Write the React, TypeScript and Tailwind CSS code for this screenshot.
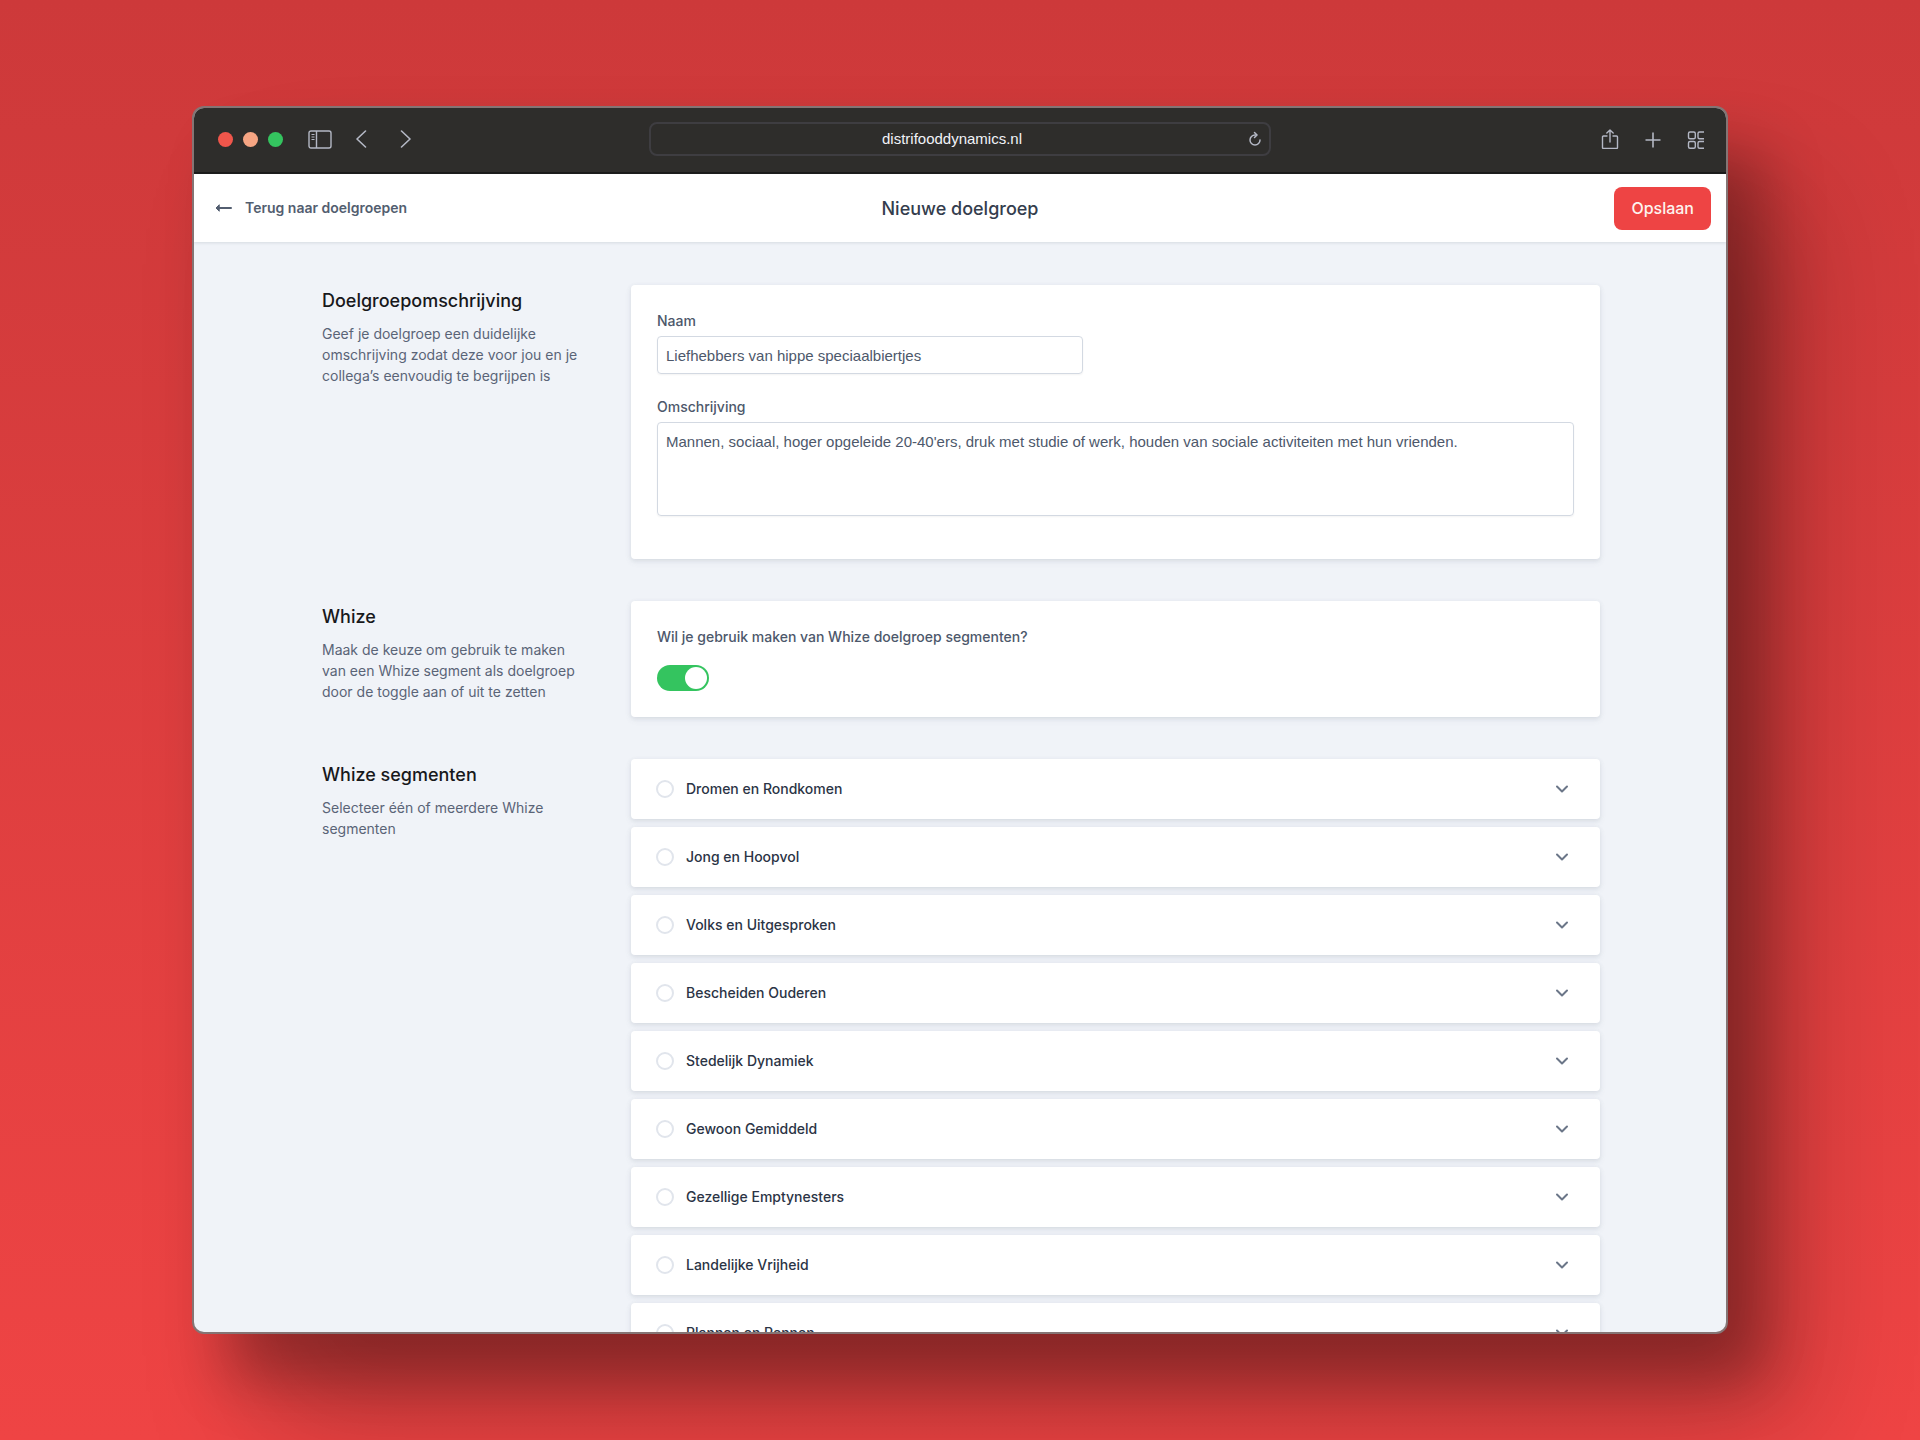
import { FC, ReactElement, ReactNode, useState } from "react";

const segments = [
  "Dromen en Rondkomen",
  "Jong en Hoopvol",
  "Volks en Uitgesproken",
  "Bescheiden Ouderen",
  "Stedelijk Dynamiek",
  "Gewoon Gemiddeld",
  "Gezellige Emptynesters",
  "Landelijke Vrijheid",
  "Plannen en Rennen",
];

const cardShadow = "shadow-[0_1px_4px_rgba(110,120,135,0.12),0_3px_6px_rgba(110,120,135,0.10)]";

const BrowserBar: FC = (): ReactElement => (
  <div className="grid h-[66px] shrink-0 grid-cols-[1fr_622px_1fr] items-center border-b-2 border-[#1a1a1a] bg-[#2e2d2b] pb-0.5 text-[#b4b8c5]">
    <div className="flex items-center pl-6">
      <div className="flex gap-[10px]">
        <span className="size-[15px] rounded-full bg-[#f0564b]" />
        <span className="size-[15px] rounded-full bg-[#f6a583]" />
        <span className="size-[15px] rounded-full bg-[#34c45f]" />
      </div>
      <button type="button" aria-label="Zijbalk" className="ml-[25px]">
        <svg className="h-[19px] w-6" viewBox="0 0 24 19" fill="none" stroke="currentColor">
          <rect x="1" y="1" width="22" height="17" rx="2" strokeWidth="1.4" />
          <path d="M8.5 1v17" strokeWidth="1.4" />
          <path d="M3.5 4.5h3M3.5 7h3M3.5 9.5h3" />
        </svg>
      </button>
      <button type="button" aria-label="Vorige" className="ml-[23px]">
        <svg className="h-[19px] w-3" viewBox="0 0 12 19" fill="none" stroke="currentColor" strokeWidth="1.6" strokeLinecap="round" strokeLinejoin="round">
          <path d="M10.5 1 2 9l8.500 8" />
        </svg>
      </button>
      <button type="button" aria-label="Volgende" className="ml-8">
        <svg className="h-[19px] w-3" viewBox="0 0 12 19" fill="none" stroke="currentColor" strokeWidth="1.6" strokeLinecap="round" strokeLinejoin="round">
          <path d="m2.500 1 8.500 8-8.500 8" />
        </svg>
      </button>
    </div>

    <div className="flex h-[34px] items-center rounded-lg border-2 border-[#3e3d41] px-1.5">
      <span className="flex-1 text-center font-['Liberation_Sans',Arial,sans-serif] text-[15px] text-[#f1f3f8]">
        distrifooddynamics.nl
      </span>
      <button type="button" aria-label="Vernieuwen">
        <svg className="size-4" viewBox="0 0 16 16" fill="none" stroke="currentColor" strokeWidth="1.5" strokeLinecap="round" strokeLinejoin="round">
          <path d="M13 9a5 5 0 1 1-5-5h1.500" />
          <path d="M7.500 1.500l2.500 2.500-2.500 2.500" />
        </svg>
      </button>
    </div>

    <div className="flex items-center justify-end gap-[23px] pr-5">
      <button type="button" aria-label="Delen">
        <svg className="size-5" viewBox="0 0 20 20" fill="none" stroke="currentColor" strokeWidth="1.4" strokeLinecap="round" strokeLinejoin="round">
          <path d="M7 7H3.500q-1 0-1 1v10.500q0 1 1 1h13q1 0 1-1V8q0-1-1-1H13" />
          <path d="M10 13V1M6.800 4 10 1l3.200 3" />
        </svg>
      </button>
      <button type="button" aria-label="Nieuw tabblad">
        <svg className="size-5" viewBox="0 0 20 20" fill="none" stroke="currentColor" strokeWidth="1.6">
          <path d="M10 3.500v15M2.500 11h15" />
        </svg>
      </button>
      <button type="button" aria-label="Tabbladoverzicht">
        <svg className="size-5" viewBox="0 0 20 20" fill="none" stroke="currentColor" strokeWidth="1.4">
          <rect x="2.500" y="3" width="6.800" height="6.800" rx="1.500" />
          <rect x="2.500" y="12.500" width="6.800" height="6.800" rx="1.500" />
          <path d="M18 3h-4.500q-1.500 0-1.500 1.500v3.800q0 1.500 1.500 1.500H18" />
          <path d="M18 12.500h-4.500q-1.500 0-1.500 1.500v3.800q0 1.500 1.500 1.500H18" />
        </svg>
      </button>
    </div>
  </div>
);

const Section: FC<{ title: string; text: string; children: ReactNode }> = ({ title, text, children }): ReactElement => (
  <section className="grid grid-cols-[267px_1fr] gap-[42px]">
    <div>
      <h2 className="text-lg font-medium leading-8 text-[#18181b]">{title}</h2>
      <p className="mt-1.5 text-sm leading-[21px] text-[#5a6477]">{text}</p>
    </div>
    {children}
  </section>
);

const SegmentRow: FC<{ name: string }> = ({ name }): ReactElement => (
  <li className={`flex h-[60px] items-center rounded bg-white pl-[25px] pr-7 ${cardShadow}`}>
    <label className="flex items-center gap-3 text-sm font-medium text-[#2b3445]">
      <input
        type="checkbox"
        className="size-[18px] appearance-none rounded-full border-2 border-[#e1e5ec] bg-white checked:bg-[#34c45f]"
      />
      {name}
    </label>
    <button type="button" aria-label={`${name} uitklappen`} className="ml-auto text-[#6b7688]">
      <svg className="size-5" viewBox="0 0 20 20" fill="none" stroke="currentColor" strokeWidth="2" strokeLinecap="round" strokeLinejoin="round">
        <path d="m5 7.500 5 5 5-5" />
      </svg>
    </button>
  </li>
);

const App: FC = (): ReactElement => {
  const [name, setName] = useState("Liefhebbers van hippe speciaalbiertjes");
  const [description, setDescription] = useState(
    "Mannen, sociaal, hoger opgeleide 20-40'ers, druk met studie of werk, houden van sociale activiteiten met hun vrienden.",
  );
  const [useWhize, setUseWhize] = useState(true);

  return (
    <div className="h-screen overflow-hidden bg-linear-to-b from-[#cd393a] to-[#ef4444] px-48 py-[106px] font-[Inter,'Liberation_Sans',sans-serif]">
      <div className="flex h-full flex-col overflow-hidden rounded-xl border-2 border-[#857474] bg-[#f0f3f8] shadow-[36px_46px_60px_rgba(0,0,0,0.28),70px_90px_120px_rgba(0,0,0,0.22)]">
        <BrowserBar />

        <header className="z-10 grid h-[68px] shrink-0 grid-cols-[1fr_auto_1fr] items-center bg-white px-[15px] shadow-[0_1px_3px_rgba(110,120,135,0.2)]">
          <a href="#doelgroepen" className="flex items-center gap-3 pl-[5px] text-sm font-semibold text-[#535e70]">
            <svg className="h-4 w-[19px]" viewBox="0 0 19 16" fill="none" stroke="currentColor" strokeWidth="2" strokeLinecap="round" strokeLinejoin="round">
              <path d="M17 8H3" />
              <path d="M5 5 2 8l3 3Z" fill="currentColor" strokeWidth="1" />
            </svg>
            Terug naar doelgroepen
          </a>
          <h1 className="pt-0.5 text-lg font-medium text-[#343d4d]">Nieuwe doelgroep</h1>
          <button type="submit" form="doelgroep" className="h-[43px] justify-self-end rounded-lg bg-[#ee4444] px-[17px] text-base font-medium text-[#fdf3ef]">
            Opslaan
          </button>
        </header>

        <form id="doelgroep" onSubmit={(event) => event.preventDefault()} className="flex min-h-0 flex-1 flex-col gap-[42px] overflow-hidden pl-32 pr-[126px] pt-[43px]">
          <Section
            title="Doelgroepomschrijving"
            text="Geef je doelgroep een duidelijke omschrijving zodat deze voor jou en je collega’s eenvoudig te begrijpen is"
          >
            <div className={`flex flex-col rounded bg-white px-[26px] pb-[43px] pt-[26px] ${cardShadow}`}>
              <label htmlFor="naam" className="text-sm font-medium leading-5 text-[#4d586b]">
                Naam
              </label>
              <input
                id="naam"
                type="text"
                value={name}
                onChange={(event) => setName(event.target.value)}
                className="mt-[5px] h-[38px] w-[426px] rounded border border-[#d3d9e2] px-2 font-['Liberation_Sans',Arial,sans-serif] text-[15px] text-[#4d586b] shadow-xs"
              />
              <label htmlFor="omschrijving" className="mt-[23px] text-sm font-medium leading-5 text-[#4d586b]">
                Omschrijving
              </label>
              <textarea
                id="omschrijving"
                value={description}
                onChange={(event) => setDescription(event.target.value)}
                className="mt-[5px] h-[94px] resize-none rounded border border-[#d3d9e2] px-2 py-2 font-['Liberation_Sans',Arial,sans-serif] text-[15px] leading-[21px] text-[#4d586b] shadow-xs"
              />
            </div>
          </Section>

          <Section
            title="Whize"
            text="Maak de keuze om gebruik te maken van een Whize segment als doelgroep door de toggle aan of uit te zetten"
          >
            <div className={`flex flex-col items-start rounded bg-white px-[26px] pb-[26px] pt-[26px] ${cardShadow}`}>
              <label htmlFor="whize" className="text-sm font-medium leading-5 text-[#4d586b]">
                Wil je gebruik maken van Whize doelgroep segmenten?
              </label>
              <input
                id="whize"
                type="checkbox"
                role="switch"
                checked={useWhize}
                onChange={(event) => setUseWhize(event.target.checked)}
                className="mt-[18px] h-[26px] w-[52px] appearance-none rounded-full bg-[#cbd5e1] p-0.5 before:block before:size-[22px] before:rounded-full before:bg-white before:content-[''] checked:bg-[#34c45f] checked:before:ml-auto"
              />
            </div>
          </Section>

          <Section title="Whize segmenten" text="Selecteer één of meerdere Whize segmenten">
            <ul className="flex flex-col gap-2">
              {segments.map((segment) => (
                <SegmentRow key={segment} name={segment} />
              ))}
            </ul>
          </Section>
        </form>
      </div>
    </div>
  );
};

export default App;
